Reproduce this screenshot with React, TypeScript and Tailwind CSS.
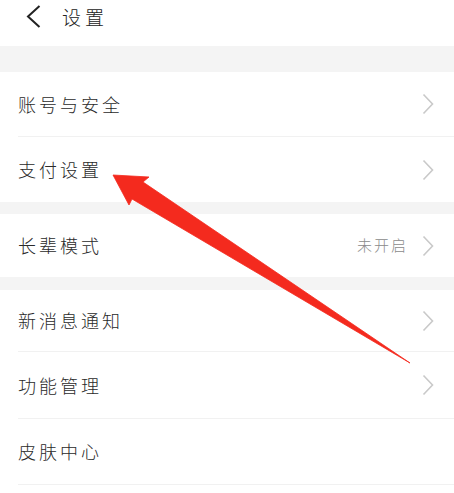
const font = { fontFamily: '"Noto Sans CJK SC", "Noto Sans", sans-serif' };

function Chevron() {
  return (
    <svg width="12" height="22" viewBox="0 0 12 22" className="shrink-0">
      <path d="M1.5 1.5 L10.5 11 L1.5 20.5" fill="none" stroke="#c9c9c9" strokeWidth="1.6" />
    </svg>
  );
}

type Row = { label: string; h: string; value?: string; arrow?: boolean; line?: boolean };

function SettingRow({ label, h, value, arrow = true, line = true }: Row) {
  return (
    <div className={`flex items-center bg-white pl-[18px] ${h}`}>
      <div className={`flex h-full flex-1 items-center pr-[20px] ${line ? "border-b border-[#f1f1f1]" : ""}`}>
        <span className="flex-1 text-[18px] font-light tracking-[3px] text-[#2a2a2a]">{label}</span>
        {value && (
          <span className="mr-[14px] text-[15px] font-light tracking-[2px] text-[#8a8a8a]">{value}</span>
        )}
        {arrow && <Chevron />}
      </div>
    </div>
  );
}

export default function App() {
  return (
    <div className="relative h-[493px] w-[454px] overflow-hidden bg-white" style={font}>
      {/* Header */}
      <div className="flex h-[46px] items-center bg-white pb-[13px] pl-[26px]">
        <svg width="15" height="23" viewBox="0 0 15 23">
          <path d="M13.5 1 L2 11.5 L13.5 22" fill="none" stroke="#222" strokeWidth="2" />
        </svg>
        <span className="ml-[21px] mt-[2px] text-[19px] font-light tracking-[4px] text-[#222]">设置</span>
      </div>
      <div className="h-[26px] bg-[#f4f4f4]" />

      <SettingRow label="账号与安全" h="h-[65px]" />
      <SettingRow label="支付设置" h="h-[65px]" line={false} />
      <div className="h-[12px] bg-[#f4f4f4]" />
      <SettingRow label="长辈模式" h="h-[63px]" value="未开启" line={false} />
      <div className="h-[13px] bg-[#f4f4f4]" />
      <SettingRow label="新消息通知" h="h-[62px]" />
      <SettingRow label="功能管理" h="h-[67px]" />
      <SettingRow label="皮肤中心" h="h-[66px]" arrow={false} />

      {/* Red annotation arrow */}
      <svg className="pointer-events-none absolute left-0 top-0" width="454" height="493" viewBox="0 0 454 493">
        <polygon
          points="113,175 149,177 143,182 410,363 132,199 129,205"
          fill="#f42a1e"
          stroke="#f42a1e"
          strokeWidth="0.8"
          strokeLinejoin="round"
        />
      </svg>
    </div>
  );
}
